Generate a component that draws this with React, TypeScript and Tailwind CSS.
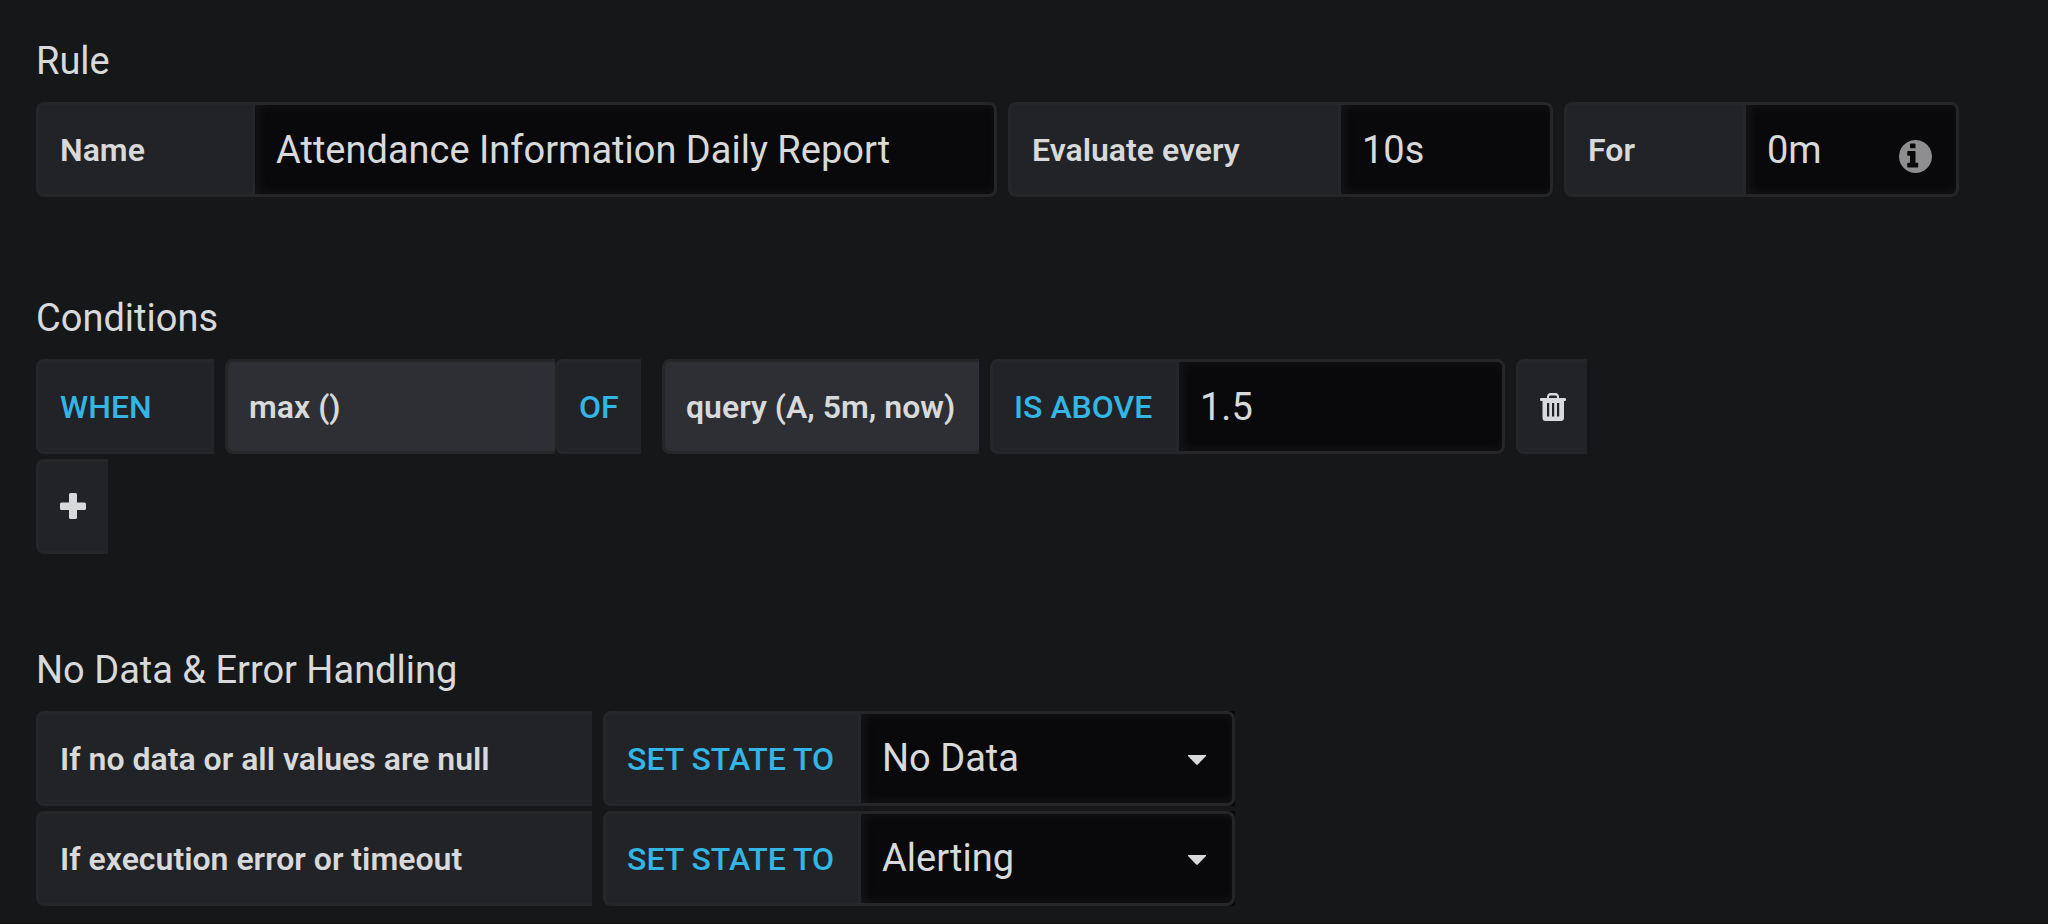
import React, { useState } from "react";

const BOX =
  "flex h-[95px] shrink-0 items-center rounded-l-lg border-3 border-r-0 border-[#262628] px-[21px] text-[32px] whitespace-nowrap";
const LABEL = BOX + " bg-[#222326] font-semibold";
const KEYWORD = BOX + " bg-[#222326] font-medium text-[#33b5e5]";
const PART = BOX + " bg-[#2e2f34] font-semibold";
const INPUT =
  "h-[95px] rounded-r-lg border-3 border-[#262628] bg-[#09090b] px-[21px] text-[38px] shadow-[inset_3px_0_12px_rgba(150,150,150,0.1)] outline-none";

function TrashIcon() {
  return (
    <svg viewBox="0 0 26 28" className="h-[28px] w-[26px] shrink-0" fill="currentColor" aria-hidden="true">
      <path
        fillRule="evenodd"
        d="M7 5V3.500Q7.500 0 10.500 0H15.500Q18.500 0 19 3.500V5H25Q26 5 26 6V7Q26 8 25 8H24V24.500Q24 28 21 28H5.500Q2.500 28 2.500 24.500V8H1Q0 8 0 7V6Q0 5 1 5ZM9 5H17V4Q17 2.500 15.500 2.500H10.500Q9 2.500 9 4ZM7 10V23.500H9.200V10ZM12 10V23.500H14.200V10ZM17 10V23.500H19.200V10Z"
      />
    </svg>
  );
}

function PlusIcon() {
  return (
    <svg viewBox="0 0 26 28" className="h-[28px] w-[26px] shrink-0" fill="currentColor" aria-hidden="true">
      <rect x="9" y="0" width="8" height="26" rx="1.6" />
      <rect x="0" y="9.500" width="26" height="7.500" rx="1.600" />
    </svg>
  );
}

function InfoIcon() {
  return (
    <svg
      viewBox="128 128 1536 1536"
      className="absolute top-[38px] right-[27px] size-[33px] text-[#8e8e8e]"
      fill="currentColor"
      aria-hidden="true"
    >
      <path d="M1024 1376v-160q0-14-9-23t-23-9h-96v-512q0-14-9-23t-23-9h-320q-14 0-23 9t-9 23v160q0 14 9 23t23 9h96v320h-96q-14 0-23 9t-9 23v160q0 14 9 23t23 9h448q14 0 23-9t9-23zM896 480v-160q0-14-9-23t-23-9h-192q-14 0-23 9t-9 23v160q0 14 9 23t23 9h192q14 0 23-9t9-23zM1664 896q0 209-103 385.500t-279.500 279.500-385.500 103-385.500-103-279.500-279.500-103-385.500 103-385.500 279.500-279.500 385.500-103 385.500 103 279.500 279.500 103 385.500z" />
    </svg>
  );
}

function Section({ title, children }: { title: string; children: React.ReactNode }) {
  return (
    <section>
      <h5 className="mb-[17px] text-[38px] leading-[48px]">{title}</h5>
      <div className="flex flex-col gap-[5px]">{children}</div>
    </section>
  );
}

function StateRow({ id, label, initial }: { id: string; label: string; initial: string }) {
  const [value, setValue] = useState(initial);
  return (
    <div className="flex gap-[11px]">
      <label htmlFor={id} className={LABEL + " w-[556px]"}>
        {label}
      </label>
      <div className="flex">
        <span className={KEYWORD + " w-[255px]"}>SET STATE TO</span>
        <div className="relative w-[377px] bg-[#09090b]">
          <select
            id={id}
            value={value}
            onChange={(e) => setValue(e.target.value)}
            className={INPUT + " w-full appearance-none"}
          >
            <option>No Data</option>
            <option>Alerting</option>
            <option>Keep Last State</option>
            <option>Ok</option>
          </select>
          <svg
            viewBox="0 0 18 10"
            className="pointer-events-none absolute top-[44px] right-[29px] h-[10px] w-[18px]"
            fill="currentColor"
            aria-hidden="true"
          >
            <path d="M0 0H18V1L9.800 9.500Q9 10.300 8.200 9.500L0 1Z" />
          </svg>
        </div>
      </div>
    </div>
  );
}

export default function App() {
  return (
    <main className="flex min-h-screen flex-col gap-[92px] border-b border-[#130c0e] bg-[#161719] px-9 pt-[37px] pb-4 font-['Roboto',sans-serif] text-[#d8d9da]">
      <Section title="Rule">
        <div className="flex gap-[11px] pb-[5px]">
          <div className="flex">
            <label htmlFor="name" className={LABEL + " w-[216px]"}>
              Name
            </label>
            <input id="name" className={INPUT + " w-[745px]"} defaultValue="Attendance Information Daily Report" />
          </div>
          <div className="flex">
            <label htmlFor="every" className={LABEL + " w-[330px]"}>
              Evaluate every
            </label>
            <input id="every" className={INPUT + " w-[215px]"} defaultValue="10s" />
          </div>
          <div className="flex">
            <label htmlFor="for" className={LABEL + " w-[179px]"}>
              For
            </label>
            <div className="relative w-[216px]">
              <input id="for" className={INPUT + " w-full"} defaultValue="0m" />
              <InfoIcon />
            </div>
          </div>
        </div>
      </Section>

      <Section title="Conditions">
        <div className="flex gap-[11px]">
          <button type="button" className={KEYWORD + " w-[178px]"}>
            WHEN
          </button>
          <div className="flex">
            <button type="button" className={PART + " w-[330px]"}>
              max ()
            </button>
            <span className={KEYWORD + " mr-[10px] w-[86px]"}>OF</span>
          </div>
          <button type="button" className={PART + " w-[317px]"}>
            query (A, 5m, now)
          </button>
          <div className="flex">
            <label htmlFor="threshold" className={KEYWORD + " w-[186px]"}>
              IS ABOVE
            </label>
            <input id="threshold" className={INPUT + " w-[329px]"} defaultValue="1.5" />
          </div>
          <button type="button" aria-label="Delete condition" className={LABEL + " w-[71px]"}>
            <TrashIcon />
          </button>
        </div>
        <button type="button" aria-label="Add condition" className={LABEL + " w-[72px]"}>
          <PlusIcon />
        </button>
      </Section>

      <Section title="No Data &amp; Error Handling">
        <StateRow id="no-data" label="If no data or all values are null" initial="No Data" />
        <StateRow id="exec-error" label="If execution error or timeout" initial="Alerting" />
      </Section>
    </main>
  );
}
